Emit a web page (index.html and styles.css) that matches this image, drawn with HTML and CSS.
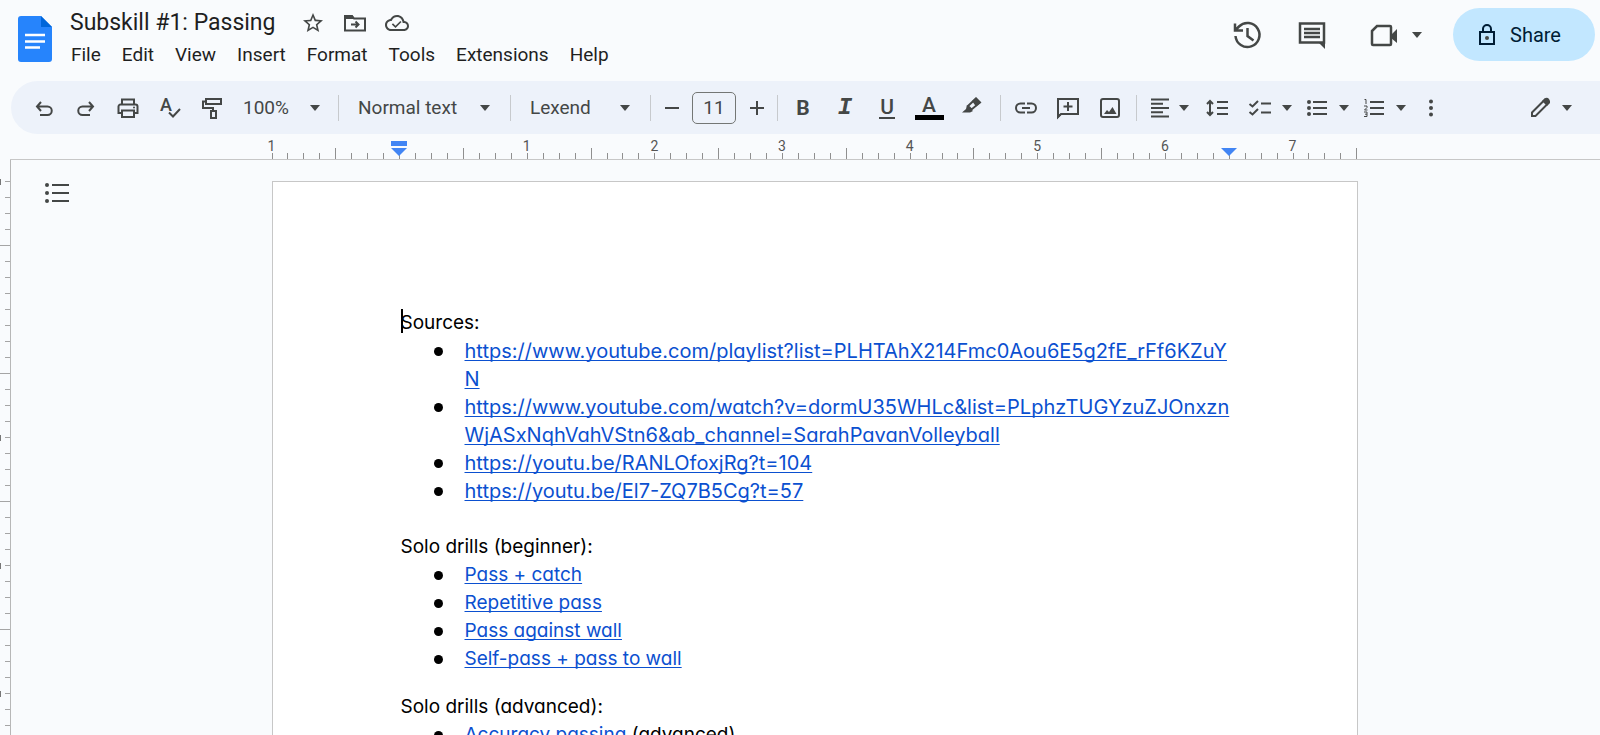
FILE: index.html
```html
<!DOCTYPE html>
<html lang="en">
<head>
    <meta charset="UTF-8">
    <meta name="viewport" content="width=device-width, initial-scale=1.0">
    <title>Subskill #1: Passing</title>
    <link rel="stylesheet" href="styles.css">
</head>
<body>
    <header class="header">
        <svg class="logo" viewBox="0 0 34 46">
            <path d="M3 0h20l11 11v32a3 3 0 0 1-3 3H3a3 3 0 0 1-3-3V3a3 3 0 0 1 3-3z" fill="#2684fc"/>
            <path d="M23 0l11 11H23z" fill="#0066da"/>
            <path d="M7 19h20M7 25.500h20M7 31.500h15" stroke="#fff" stroke-width="2.600"/>
        </svg>
        <div class="heading">
            <div class="title-row">
                <h1 class="title">Subskill #1: Passing</h1>
                <button class="title-btn" aria-label="Star">
                    <svg class="icon" viewBox="0 0 24 24"><path class="solid" d="M22 9.240l-7.190-.620L12 2 9.190 8.630 2 9.240l5.460 4.730L5.820 21 12 17.270 18.180 21l-1.630-7.030L22 9.240zM12 15.400l-3.760 2.270 1-4.280-3.320-2.880 4.380-.380L12 6.100l1.710 4.040 4.380.380-3.320 2.880 1 4.280L12 15.400z"/></svg>
                </button>
                <button class="title-btn" aria-label="Move">
                    <svg class="icon" viewBox="0 0 24 24"><path d="M2 5h7l2 2.500h11v12H2zM8 13.500h7M12.500 10.500l3 3-3 3"/><path class="solid" d="M2 4h7l3 4H2z"/></svg>
                </button>
                <button class="title-btn" aria-label="Saved to Drive">
                    <svg class="icon" viewBox="0 0 24 24"><path class="solid" d="M19.350 10.040C18.670 6.590 15.640 4 12 4 9.110 4 6.600 5.640 5.350 8.040 2.340 8.360 0 10.910 0 14c0 3.310 2.690 6 6 6h13c2.760 0 5-2.240 5-5 0-2.640-2.050-4.780-4.650-4.960zM19 18H6c-2.210 0-4-1.790-4-4 0-2.050 1.530-3.760 3.560-3.970l1.070-.110.500-.950C8.080 7.140 9.940 6 12 6c2.620 0 4.880 1.860 5.390 4.430l.300 1.500 1.530.110c1.560.100 2.780 1.410 2.780 2.960 0 1.650-1.350 3-3 3zm-8.500-3.300l-2.500-2.500-1.200 1.200 3.700 3.700 6-6-1.200-1.200z"/></svg>
                </button>
            </div>
            <nav class="menu">
                <button>File</button>
                <button>Edit</button>
                <button>View</button>
                <button>Insert</button>
                <button>Format</button>
                <button>Tools</button>
                <button>Extensions</button>
                <button>Help</button>
            </nav>
        </div>
        <div class="actions">
            <button class="action" aria-label="Version history">
                <svg class="icon-lg" viewBox="0 0 28 28"><path d="M2.500 15a12 12 0 1 0 3.500-9.500L3 8.500M2 2.500v7h8M14.500 7v8l6 4.500"/></svg>
            </button>
            <button class="action" aria-label="Comments">
                <svg class="icon-lg" viewBox="0 0 28 28"><path d="M2 2.500h24v19H2z"/><path class="solid" d="M20 21h7v7z"/><path d="M6 8h16M6 12h16M6 16h16"/></svg>
            </button>
            <button class="action with-caret" aria-label="Join a call">
                <svg class="icon-lg" viewBox="0 0 28 28"><path d="M2 10l5-5h13a1 1 0 0 1 1 1v17a1 1 0 0 1-1 1H3a1 1 0 0 1-1-1z"/><path class="solid" d="M21 14l6-6v14l-6-5z"/></svg>
                <span class="caret"></span>
            </button>
            <button class="share">
                <svg class="icon" viewBox="0 0 24 24"><path d="M5 9h14v12H5zM8 9V6a4 4 0 0 1 8 0v3"/><circle class="solid" cx="12" cy="15" r="2"/></svg>
                Share
            </button>
        </div>
    </header>

    <div class="toolbar">
        <div class="group">
            <button class="tool" aria-label="Undo"><svg class="icon" viewBox="0 0 24 24"><path d="M9 6L5 10.500l4 4.500M5 10.500h10.500a4 4 0 0 1 0 8.500H8"/></svg></button>
            <button class="tool" aria-label="Redo"><svg class="icon" viewBox="0 0 24 24"><path d="M15 6l4 4.500-4 4.500M19 10.500H8.500a4 4 0 0 0 0 8.500H16"/></svg></button>
            <button class="tool" aria-label="Print"><svg class="icon" viewBox="0 0 24 24"><path d="M6 8V3.500h12V8M6 17H2.500v-6.500a2 2 0 0 1 2-2h15a2 2 0 0 1 2 2V17H18M6 14.500h12v6.500H6z"/><circle class="solid" cx="18" cy="11.500" r="1"/></svg></button>
            <button class="tool" aria-label="Spelling"><svg class="icon" viewBox="0 0 24 24"><text class="spell" x="2" y="15">A</text><path d="M11 16.500l4 4 7-7.500"/></svg></button>
            <button class="tool" aria-label="Paint format"><svg class="icon" viewBox="0 0 24 24"><path d="M6 3h15v5H6zM6 5.500H3V12h10v3M11 15h5v7h-5z"/></svg></button>
            <label class="picker zoom"><select aria-label="Zoom"><option>100%</option></select><span class="caret"></span></label>
        </div>
        <div class="group">
            <label class="picker style"><select aria-label="Paragraph style"><option>Normal text</option></select><span class="caret"></span></label>
        </div>
        <div class="group">
            <label class="picker font"><select aria-label="Font"><option>Lexend</option></select><span class="caret"></span></label>
        </div>
        <div class="group">
            <button class="tool step" aria-label="Decrease font size"><svg class="icon" viewBox="0 0 24 24"><path d="M5 12h14"/></svg></button>
            <input class="size" type="text" value="11" aria-label="Font size">
            <button class="tool step" aria-label="Increase font size"><svg class="icon" viewBox="0 0 24 24"><path d="M5 12h14M12 5v14"/></svg></button>
        </div>
        <div class="group format">
            <button class="tool letter bold" aria-label="Bold">B</button>
            <button class="tool letter italic" aria-label="Italic">I</button>
            <button class="tool letter" aria-label="Underline"><span class="under">U</span></button>
            <button class="tool letter" aria-label="Text color"><span class="color">A</span></button>
            <button class="tool" aria-label="Highlight color"><svg class="icon" viewBox="0 0 24 24"><path d="M9 10l8-7.500 4 4-8.500 7z"/><path class="solid" d="M8 9l6 6-3 1.500H3l4-3.500zM13 5l4-3.500 5 5-5 4z"/></svg></button>
        </div>
        <div class="group insert">
            <button class="tool" aria-label="Insert link"><svg class="icon" viewBox="0 0 24 24"><path d="M11 7.500H6.500a4.500 4.500 0 0 0 0 9H11M13 7.500h4.500a4.500 4.500 0 0 1 0 9H13M8 12h8"/></svg></button>
            <button class="tool" aria-label="Add comment"><svg class="icon" viewBox="0 0 24 24"><path d="M2 21V3h20v15H5zM12 6v9M7.500 10.500h9"/><path class="solid" d="M1 18h5l-5 5z"/></svg></button>
            <button class="tool" aria-label="Insert image"><svg class="icon" viewBox="0 0 24 24"><rect x="3" y="3" width="18" height="18" rx="2"/><path class="solid" d="M6 18l3-4 2 2 3.500-5 4 7z"/></svg></button>
        </div>
        <div class="group last">
            <button class="tool wide align" aria-label="Align"><svg class="icon" viewBox="0 0 24 24"><path d="M3 3.500h18M3 7.700h12M3 12h18M3 16.200h12M3 20.500h18"/></svg><span class="caret"></span></button>
            <button class="tool spacing" aria-label="Line spacing"><svg class="icon" viewBox="0 0 24 24"><path d="M12 6h11M12 12h11M12 18h11M5 6v12M2 8l3-3 3 3M2 16l3 3 3-3"/></svg></button>
            <button class="tool wide" aria-label="Checklist"><svg class="icon" viewBox="0 0 24 24"><path d="M1.500 8l3 2.500L10 5M1.500 16l3 2.500L10 13M13 7.500h10M13 16.500h10"/></svg><span class="caret"></span></button>
            <button class="tool wide" aria-label="Bulleted list"><svg class="icon" viewBox="0 0 24 24"><path d="M8 6h14M8 12h14M8 18h14"/><g class="solid"><circle cx="4" cy="6" r="2"/><circle cx="4" cy="12" r="2"/><circle cx="4" cy="18" r="2"/></g></svg><span class="caret"></span></button>
            <button class="tool wide" aria-label="Numbered list"><svg class="icon" viewBox="0 0 24 24"><path d="M8 6h14M8 12h14M8 18h14"/><path class="thin" d="M2.500 3.500H4V8M2 10h3v1.500L2.500 14H5.500M2 16h3v4.500H2M3 18.200h2"/></svg><span class="caret"></span></button>
            <button class="tool narrow" aria-label="More"><svg class="icon" viewBox="0 0 24 24"><g class="solid"><circle cx="12" cy="5.500" r="2"/><circle cx="12" cy="12" r="2"/><circle cx="12" cy="18.500" r="2"/></g></svg></button>
        </div>
        <button class="tool wide mode" aria-label="Editing mode"><svg class="icon" viewBox="0 0 24 24"><path d="M4 20v-3.500L17 3.500l3.500 3.500-13 13z"/><path class="solid" d="M14 5l3.500-3q2-1 3.500 1t1 3.500L19 10z"/></svg><span class="caret"></span></button>
    </div>

    <div class="ruler">
        <div class="ruler-scale" id="ruler"></div>
    </div>

    <div class="workspace">
        <div class="side-ruler" id="sideRuler"></div>
        <main class="canvas">
            <div class="outline">
                <button aria-label="Show outline"><svg class="icon" viewBox="0 0 24 24"><path d="M7 4h17M7 12h17M7 20h17"/><g class="solid"><circle cx="2" cy="4" r="2"/><circle cx="2" cy="12" r="2"/><circle cx="2" cy="20" r="2"/></g></svg></button>
            </div>
            <article class="page">
                <p><span class="cursor"></span>Sources:</p>
                <ul class="urls">
                    <li><a href="https://www.youtube.com/playlist?list=PLHTAhX214Fmc0Aou6E5g2fE_rFf6KZuYN">https://www.youtube.com/playlist?list=PLHTAhX214Fmc0Aou6E5g2fE_rFf6KZuY<br>N</a></li>
                    <li><a href="https://www.youtube.com/watch?v=dormU35WHLc">https://www.youtube.com/watch?v=dormU35WHLc&amp;list=PLphzTUGYzuZJOnxzn<br>WjASxNqhVahVStn6&amp;ab_channel=SarahPavanVolleyball</a></li>
                    <li><a href="https://youtu.be/RANLOfoxjRg?t=104">https://youtu.be/RANLOfoxjRg?t=104</a></li>
                    <li><a href="https://youtu.be/El7-ZQ7B5Cg?t=57">https://youtu.be/El7-ZQ7B5Cg?t=57</a></li>
                </ul>
                <p class="after-blank">Solo drills (beginner):</p>
                <ul>
                    <li><a href="#">Pass + catch</a></li>
                    <li><a href="#">Repetitive pass</a></li>
                    <li><a href="#">Pass against wall</a></li>
                    <li><a href="#">Self-pass + pass to wall</a></li>
                </ul>
                <p class="after-list">Solo drills (advanced):</p>
                <ul>
                    <li><a href="#">Accuracy passing</a> (advanced)</li>
                </ul>
            </article>
        </main>
    </div>

    <script src="script.js"></script>
</body>
</html>
```

FILE: styles.css
```css
* {
    box-sizing: border-box;
}
body {
    margin: 0;
    height: 100vh;
    display: flex;
    flex-direction: column;
    overflow: hidden;
    background-color: #f9fbfd;
    font-family: Roboto, sans-serif;
    font-size: 19px;
    color: #1f1f1f;
}
button, select, input {
    font: inherit;
    color: inherit;
    background: none;
    border: none;
    padding: 0;
    margin: 0;
}
button {
    cursor: pointer;
    display: flex;
    align-items: center;
}
svg {
    display: block;
    flex: none;
    overflow: visible;
    fill: none;
    stroke: #444746;
    stroke-width: 2;
}
.solid {
    fill: #444746;
    stroke: none;
}
.thin {
    stroke-width: 1;
}
.icon {
    width: 24px;
    height: 24px;
}
.icon-lg {
    width: 28px;
    height: 28px;
    stroke-width: 2.5;
}
.caret {
    border: 5px solid transparent;
    border-top: 6px solid #444746;
    border-bottom: none;
    pointer-events: none;
}

/* Header */
.header {
    display: flex;
    height: 81px;
    padding: 8px 5px 0 18px;
}
.logo {
    width: 34px;
    height: 46px;
    margin-top: 8px;
    stroke: none;
}
.heading {
    margin-left: 18px;
}
.title-row {
    display: flex;
    align-items: center;
    height: 30px;
}
.title {
    margin: 0 26px 0 0;
    font-size: 23px;
    font-weight: 400;
    line-height: 28px;
}
.title-btn {
    margin-right: 18px;
}
.menu {
    display: flex;
    gap: 21px;
    height: 32px;
    padding-left: 1px;
}
.actions {
    display: flex;
    align-items: center;
    height: 53px;
    margin-left: auto;
}
.action {
    margin-right: 37px;
}
.with-caret {
    gap: 14px;
    margin: 0 31px 0 7px;
}
.share {
    gap: 11px;
    width: 142px;
    height: 53px;
    padding-left: 22px;
    border-radius: 27px;
    background-color: #c2e7ff;
    color: #001d35;
    font-size: 20px;
}
.share svg {
    stroke: #001d35;
}

/* Toolbar */
.toolbar {
    display: flex;
    align-items: center;
    height: 53px;
    margin-left: 11px;
    padding: 0 18px 0 12px;
    border-radius: 27px 0 0 27px;
    background-color: #edf2fa;
    color: #444746;
}
.group {
    display: flex;
    align-items: center;
    height: 26px;
    border-right: 1px solid #c7cacd;
}
.format {
    padding: 0 8px 0 4px;
}
.insert {
    padding: 0 5px 0 4px;
}
.last {
    padding-left: 5px;
    border-right: none;
}
.tool {
    width: 42px;
    height: 40px;
    justify-content: center;
}
.step {
    width: 41px;
}
.wide {
    width: 57px;
    justify-content: flex-start;
    gap: 10px;
    padding-left: 6px;
}
.align {
    width: 50px;
    gap: 7px;
}
.spacing {
    width: 50px;
}
.narrow {
    width: 36px;
}
.mode {
    margin-left: auto;
    width: 60px;
}
.picker {
    display: flex;
    align-items: center;
    justify-content: space-between;
}
.picker select {
    appearance: none;
    flex: 1;
}
.zoom {
    width: 105px;
    padding: 0 18px 0 10px;
}
.style {
    width: 171px;
    padding: 0 20px 0 19px;
}
.font {
    width: 139px;
    padding: 0 20px 0 19px;
}
.size {
    width: 44px;
    height: 32px;
    border: 1px solid #747775;
    border-radius: 5px;
    text-align: center;
}
.letter {
    font-size: 21px;
    font-weight: 500;
}
.bold {
    font-weight: 700;
}
.italic {
    font-family: "Liberation Mono", monospace;
    font-style: italic;
    font-weight: 700;
    font-size: 24px;
}
.under {
    line-height: 20px;
    border-bottom: 2px solid #444746;
    padding: 0 1px;
}
.color {
    width: 29px;
    line-height: 20px;
    border-bottom: 5px solid #000;
}
.spell {
    fill: #444746;
    stroke: none;
    font-size: 18px;
    font-weight: 500;
}

/* Rulers */
.ruler {
    display: flex;
    justify-content: center;
    height: 26px;
    margin-left: 10px;
    padding-left: 19px;
    border-bottom: 1px solid #c7c7c7;
}
.ruler-scale {
    display: flex;
    align-items: flex-end;
    width: 1086px;
}
.tick {
    position: relative;
    flex: 1;
    height: 6px;
    border-left: 1px solid #8f8f8f;
}
.tick.half {
    height: 11px;
}
.tick.end {
    flex: none;
}
.label {
    position: absolute;
    bottom: 6px;
    left: -12px;
    width: 22px;
    text-align: center;
    font-size: 14px;
    line-height: 14px;
    color: #555;
}
.marker {
    position: absolute;
    left: -9px;
    bottom: 3px;
    border: 8px solid transparent;
    border-top: 8px solid #4285f4;
    border-bottom: none;
}
.marker.first::before {
    content: "";
    position: absolute;
    left: -8px;
    top: -15px;
    width: 16px;
    height: 5px;
    background-color: #4285f4;
}
.workspace {
    display: flex;
    flex: 1;
    min-height: 0;
    overflow: hidden;
}
.side-ruler {
    width: 11px;
    padding-top: 21px;
    border-right: 1px solid #b7b7b7;
    overflow: hidden;
}
.side-tick {
    position: relative;
    height: 16px;
    margin-left: 5px;
    border-top: 1px solid #a5a5a5;
}
.side-tick.half {
    margin-left: 0;
}
.side-tick.inch::before {
    content: "";
    position: absolute;
    left: -5px;
    top: -3px;
    width: 1px;
    height: 6px;
    background-color: #777;
}

/* Document */
.canvas {
    display: grid;
    grid-template-columns: 1fr 1086px 1fr;
    flex: 1;
    padding-left: 18px;
}
.outline {
    padding: 21px 0 0 16px;
}
.page {
    margin-top: 21px;
    padding: 127px 128px;
    border: 1px solid #c7c7c7;
    background-color: #fff;
    font-family: Inter, sans-serif;
    font-feature-settings: "cv11";
    font-size: 19px;
    line-height: 28px;
    color: #000;
}
.page p {
    margin: 0;
}
.page .after-blank {
    margin-top: 28px;
}
.page .after-list {
    margin-top: 20px;
}
.page ul {
    margin: 0;
    padding: 0;
    list-style: none;
}
.page .urls {
    font-size: 20px;
}
.page li {
    position: relative;
    padding-left: 64px;
    white-space: nowrap;
}
.page li::before {
    content: "";
    position: absolute;
    left: 33px;
    top: 10px;
    width: 9px;
    height: 9px;
    border-radius: 50%;
    background-color: #000;
}
.page a {
    color: #0b50d0;
    text-underline-offset: 2px;
    text-decoration-thickness: 1px;
    text-decoration-skip-ink: none;
}
.cursor {
    position: absolute;
    width: 2px;
    height: 24px;
    background-color: #000;
}
```

FILE: script.js
```js
const ruler = document.getElementById('ruler');
const sideRuler = document.getElementById('sideRuler');
const TICKS = 68; // 8.5in wide page, one tick per eighth

for (let i = 0; i <= TICKS; i++) {
    const tick = document.createElement('div');
    tick.className = 'tick';
    if (i % 8 === 4) tick.classList.add('half');
    if (i === TICKS) tick.classList.add('end');

    if (i % 8 === 0 && i !== 8) {
        const label = document.createElement('span');
        label.className = 'label';
        label.textContent = Math.abs(i / 8 - 1);
        tick.appendChild(label);
    }
    if (i === 8 || i === 60) {
        const marker = document.createElement('span');
        marker.className = i === 8 ? 'marker first' : 'marker';
        tick.appendChild(marker);
    }
    ruler.appendChild(tick);
}

for (let i = 0; i < 36; i++) {
    const tick = document.createElement('div');
    tick.className = 'side-tick';
    if (i % 8 === 4) tick.classList.add('half');
    if (i % 8 === 0 && i !== 8) tick.classList.add('inch');
    sideRuler.appendChild(tick);
}
```
